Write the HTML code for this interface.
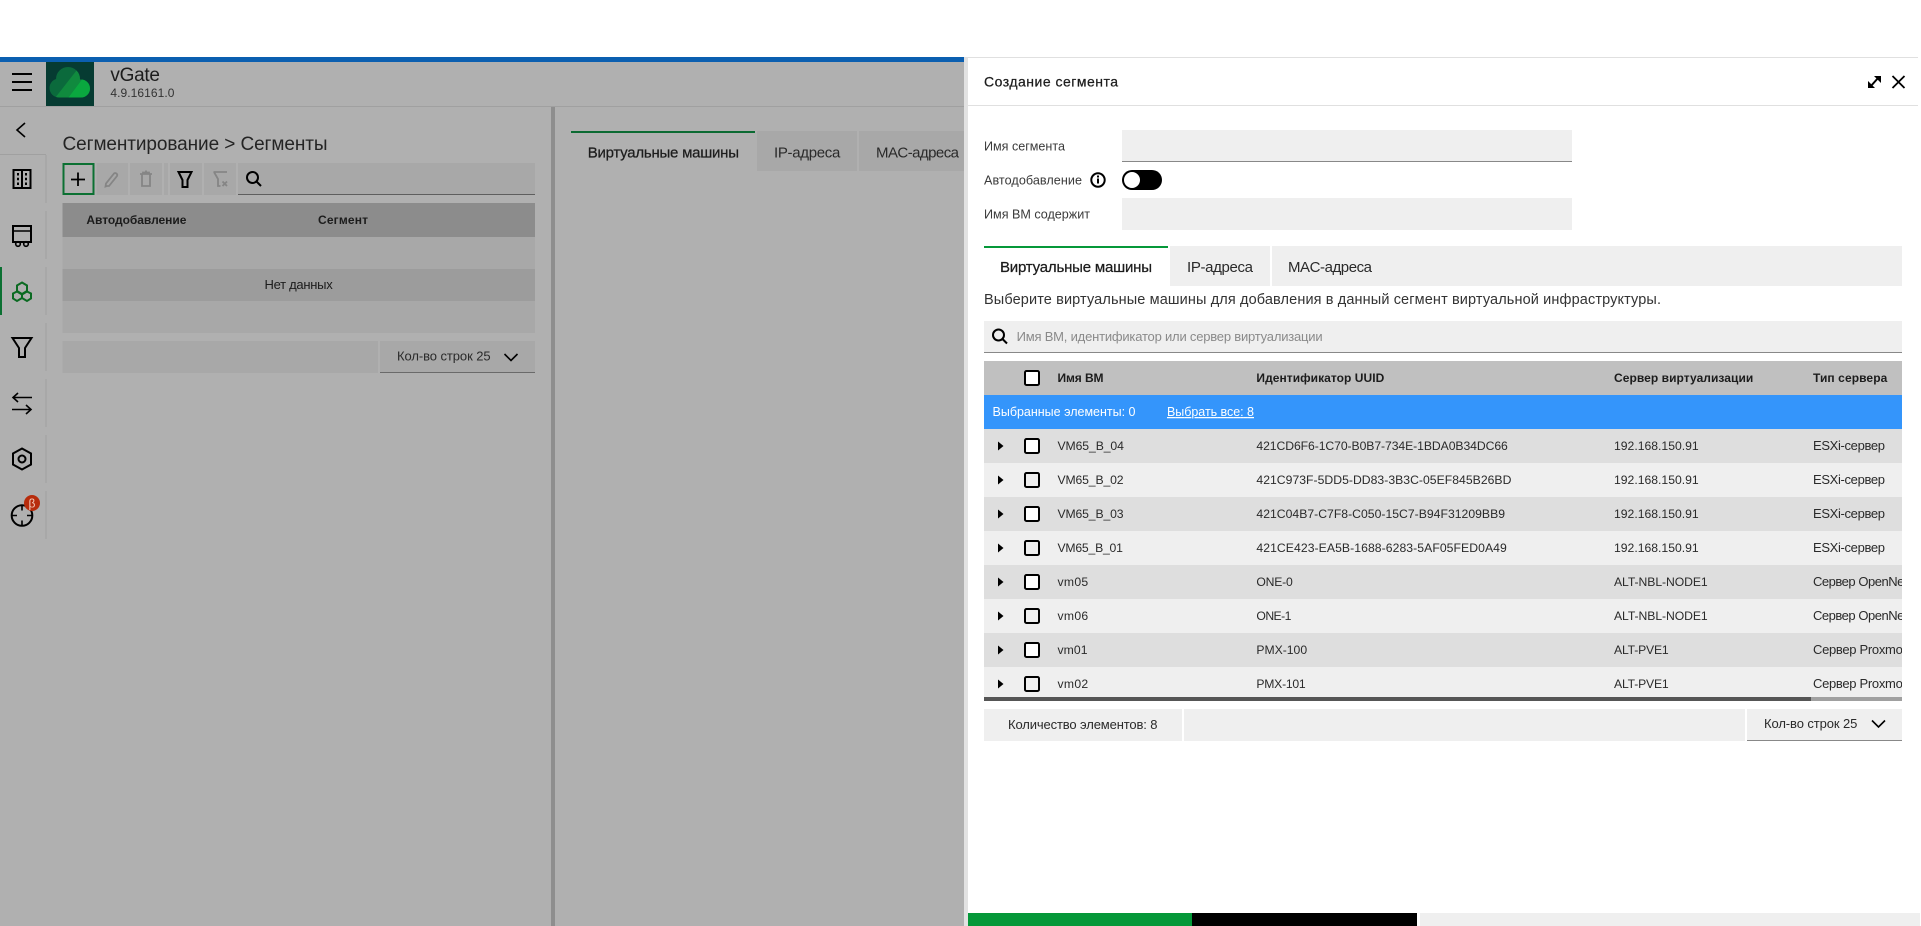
<!DOCTYPE html>
<html lang="ru">
<head>
<meta charset="utf-8">
<title>vGate - Создание сегмента</title>
<style>
html,body{margin:0;padding:0;background:#fff;width:1921px;height:926px;overflow:hidden}
svg{display:block}
text{font-family:"Liberation Sans","Noto Sans CJK SC",sans-serif;font-size:12.2px;fill:#2a2a2a}
.d{fill:#1c1c1c}
.b{font-weight:bold;font-size:12px}
.c{font-size:13px}
.s{font-size:15px}
.m{stroke:#1c1c1c;stroke-width:.25px}
.ic{fill:none;stroke:#000;stroke-width:2}
.t{stroke-width:1.6}
.g{fill:none;stroke:#858585;stroke-width:1.8}
.cb{fill:#fff;stroke:#000;stroke-width:2}
.a{fill:#000}
.l{font-size:12.6px;fill:#3a3a3a}
</style>
</head>
<body>
<svg width="1921" height="926" viewBox="0 0 1921 926" xmlns="http://www.w3.org/2000/svg">
<defs>
<clipPath id="cl"><circle cx="59" cy="88" r="9.500"/><circle cx="68" cy="79" r="12"/><circle cx="81" cy="88.500" r="9"/><rect x="59" y="85" width="22" height="12.500"/></clipPath>
<clipPath id="tb"><rect x="984" y="361" width="918" height="336"/></clipPath>
<clipPath id="lt"><rect x="560" y="120" width="404" height="60"/></clipPath>
</defs>

<!-- Background shell -->
<rect x="0" y="0" width="1921" height="926" fill="#fff"/>
<rect x="0" y="62" width="964" height="864" fill="#b0b0b0"/>
<rect x="0" y="57" width="964" height="5" fill="#0b5fb0"/>
<rect x="0" y="106" width="964" height="1" fill="#a0a0a0"/>
<rect x="551" y="107" width="4" height="819" fill="#8e8e8e"/>

<!-- App header -->
<rect x="12" y="73" width="20" height="2" class="a"/>
<rect x="12" y="81" width="20" height="2" class="a"/>
<rect x="12" y="89" width="20" height="2" class="a"/>
<rect x="46" y="62" width="48" height="44" fill="#063b32"/>
<g clip-path="url(#cl)">
<rect x="46" y="62" width="48" height="44" fill="#0b6a3c"/>
<polygon points="55,98 80,66 92,66 68,98" fill="#108a3e"/>
<polygon points="68,98 92,66 100,66 100,98" fill="#0aa83f"/>
</g>
<text x="110.400" y="81" class="d" style="font-size:19px" textLength="49.600">vGate</text>
<text x="110.400" y="97" style="font-size:12px;fill:#333" textLength="64">4.9.16161.0</text>

<!-- Sidebar -->
<polyline points="25,123 17,130 25,137" class="ic t"/>
<rect x="0" y="154" width="46" height="1" fill="#a0a0a0"/>
<rect x="45.500" y="155" width="1" height="48" fill="#a0a0a0"/>
<rect x="45.500" y="211" width="1" height="48" fill="#a0a0a0"/>
<rect x="45.500" y="267" width="1" height="48" fill="#a0a0a0"/>
<rect x="45.500" y="323" width="1" height="48" fill="#a0a0a0"/>
<rect x="45.500" y="379" width="1" height="48" fill="#a0a0a0"/>
<rect x="45.500" y="435" width="1" height="48" fill="#a0a0a0"/>
<rect x="45.500" y="491" width="1" height="48" fill="#a0a0a0"/>
<rect x="0" y="267" width="2" height="48" fill="#0b7032"/>

<!-- Sidebar icons -->
<rect x="13.500" y="170" width="17" height="18" class="ic"/>
<path d="M22 170V188" class="ic"/>
<path d="M18 173v2.500M18 177.800v2.500M18 182.500v2.500M26 173v2.500M26 177.800v2.500M26 182.500v2.500" class="ic"/>

<path d="M13 226H31V242H13Z" class="ic"/>
<path d="M13 231H31" class="ic t"/>
<circle cx="18" cy="244" r="2.300" class="ic t"/>
<circle cx="26" cy="244" r="2.300" class="ic t"/>

<g fill="none" stroke="#0b6a22" stroke-width="2">
<path d="M22 282.500l5 3v5.500l-5 3-5-3v-5.500z"/>
<path d="M17 291.500l5 3v3.500l-5 3-4-2.500v-5z"/>
<path d="M27 291.500l-5 3v3.500l5 3 4-2.500v-5z"/>
</g>

<path d="M12.500 338H31.500L25 348V357H19V348Z" class="ic"/>

<path d="M32 397.500H13M18 393L13 397.500L18 402" class="ic t"/>
<path d="M12 409.500H31M26 405L31 409.500L26 414" class="ic t"/>

<path d="M22 448.500L31 453.500V464.500L22 469.500L13 464.500V453.500Z" class="ic"/>
<circle cx="22" cy="459" r="3.500" class="ic"/>

<circle cx="22" cy="515.500" r="10.300" class="ic"/>
<path d="M22 505V510.500M22 520.500V526M11.500 515.500H17M27 515.500H32.500" class="ic t"/>
<circle cx="32" cy="503" r="8" fill="#b72c0c"/>
<text x="32" y="507.500" text-anchor="middle" style="font-size:12px;fill:#f2c8b8">β</text>

<!-- Left content -->
<text x="62.500" y="150" class="d" style="font-size:19px;fill:#242424" textLength="265">Сегментирование &gt; Сегменты</text>

<rect x="63.500" y="164" width="30" height="30" fill="none" stroke="#0b7032" stroke-width="2"/>
<path d="M78 172.500V186M71 179.500H85" class="ic t" style="stroke-width:1.800"/>
<rect x="96.500" y="163" width="31.500" height="32" fill="#a8a8a8"/>
<path d="M107 186l-1.500 .5 .5-3 8-10a2 2 0 0 1 3 2.500l-8 10z" class="g"/>
<rect x="130" y="163" width="32" height="32" fill="#a8a8a8"/>
<path d="M140 174H152M143 174V172.500H149V174M142 174V186H150V174M146 170.500V172" class="g"/>
<rect x="164" y="163" width="4" height="32" fill="#a8a8a8"/>
<rect x="170" y="163" width="32" height="32" fill="#a8a8a8"/>
<path d="M178.500 172H191.500L187.500 180V187H182.500V180Z" class="ic"/>
<rect x="204" y="163" width="32" height="32" fill="#a8a8a8"/>
<path d="M213.500 172H227M214 172L218 179V186H220.500" class="g"/>
<path d="M222.500 181.500L227 186M227 181.500L222.500 186" class="g"/>
<rect x="238" y="163" width="297" height="31" fill="#a8a8a8"/>
<rect x="238" y="194" width="297" height="1" fill="#5e5e5e"/>
<circle cx="252.500" cy="177.500" r="5.500" class="ic"/>
<path d="M256.500 181.500L261 186" class="ic"/>

<rect x="62.500" y="203" width="472.500" height="34" fill="#8c8c8c"/>
<text x="86.400" y="224" class="b d" textLength="100">Автодобавление</text>
<text x="318" y="224" class="b d" textLength="50">Сегмент</text>
<rect x="62.500" y="237" width="472.500" height="32" fill="#a8a8a8"/>
<rect x="62.500" y="269" width="472.500" height="32" fill="#9c9c9c"/>
<rect x="62.500" y="301" width="472.500" height="32" fill="#a8a8a8"/>
<text x="264.500" y="289" class="c d" textLength="68.200">Нет данных</text>

<rect x="62.500" y="341" width="315.500" height="32" fill="#a8a8a8"/>
<rect x="380" y="341" width="155" height="31" fill="#a8a8a8"/>
<rect x="380" y="372" width="155" height="1" fill="#6a6a6a"/>
<text x="397" y="360.500" class="c" textLength="93.600">Кол-во строк 25</text>
<polyline points="504.500,354 511,360.500 517.500,354" class="ic t"/>

<!-- Right background tabs -->
<rect x="571" y="131" width="184" height="2" fill="#0b6a32"/>
<rect x="757" y="131" width="100" height="40" fill="#a8a8a8"/>
<rect x="859" y="131" width="105" height="40" fill="#a8a8a8"/>
<text x="587.700" y="157.500" class="s d m" textLength="151.300">Виртуальные машины</text>
<text x="774" y="157.500" class="s" textLength="66.300">IP-адреса</text>
<g clip-path="url(#lt)"><text x="876" y="157.500" class="s" textLength="83">MAC-адреса</text></g>

<!-- Modal side panel -->
<rect x="964" y="57" width="4" height="869" fill="#e2e2e2"/>
<rect x="968" y="58" width="953" height="868" fill="#fff"/>
<rect x="964" y="57" width="954" height="1" fill="#e0e0e0"/>
<rect x="968" y="105" width="950" height="1" fill="#e0e0e0"/>
<text x="984" y="86.500" class="d m" style="font-size:14px" textLength="134">Создание сегмента</text>

<path d="M1870.500 86.500L1878.500 77.500" class="ic"/>
<polygon points="1874,76 1881,76 1881,83" class="a"/>
<polygon points="1868,81 1868,88 1875,88" class="a"/>
<path d="M1892.500 76L1904.500 88M1904.500 76L1892.500 88" class="ic t" style="stroke-width:1.800"/>

<!-- Form -->
<text x="984" y="150.500" class="l" textLength="81">Имя сегмента</text>
<rect x="1122" y="130" width="450" height="31" fill="#efefef"/>
<rect x="1122" y="161" width="450" height="1" fill="#888"/>
<text x="984" y="184.500" class="l" textLength="98">Автодобавление</text>
<circle cx="1098" cy="180" r="6.700" class="ic"/>
<rect x="1097" y="178.500" width="2" height="5" class="a"/>
<rect x="1097" y="175.500" width="2" height="2" class="a"/>
<rect x="1122" y="170" width="40" height="20" rx="10" class="a"/>
<circle cx="1132" cy="180" r="8" fill="#fff"/>
<text x="984" y="218.500" class="l" textLength="106">Имя ВМ содержит</text>
<rect x="1122" y="198" width="450" height="32" fill="#efefef"/>

<!-- Tabs -->
<rect x="984" y="246" width="184" height="2" fill="#059839"/>
<rect x="1170" y="246" width="100" height="40" fill="#efefef"/>
<rect x="1272" y="246" width="630" height="40" fill="#efefef"/>
<text x="1000" y="272" class="s d m" textLength="152">Виртуальные машины</text>
<text x="1187" y="272" class="s" textLength="66">IP-адреса</text>
<text x="1288" y="272" class="s" textLength="84">MAC-адреса</text>
<text x="984" y="304" style="font-size:14.500px;fill:#333" textLength="677">Выберите виртуальные машины для добавления в данный сегмент виртуальной инфраструктуры.</text>

<!-- Search -->
<rect x="984" y="321" width="918" height="31" fill="#efefef"/>
<rect x="984" y="352" width="918" height="1" fill="#888"/>
<circle cx="998.500" cy="335" r="5.500" class="ic"/>
<path d="M1002.500 339L1007 343.500" class="ic"/>
<text x="1016.600" y="341" style="font-size:13px;fill:#8a8a8a" textLength="306">Имя ВМ, идентификатор или сервер виртуализации</text>

<!-- Table -->
<rect x="984" y="361" width="918" height="34" fill="#c0c0c0"/>
<rect x="1025" y="371" width="14" height="14" rx="1.500" class="cb"/>
<text x="1057.500" y="382" class="b d" textLength="46">Имя ВМ</text>
<text x="1256.400" y="382" class="b d" textLength="127.900">Идентификатор UUID</text>
<text x="1614" y="382" class="b d" textLength="139.300">Сервер виртуализации</text>
<text x="1813" y="382" class="b d" textLength="74.300">Тип сервера</text>

<rect x="984" y="395" width="918" height="34" fill="#3495fb"/>
<text x="992.500" y="416" style="font-size:12.500px;fill:#fff" textLength="143">Выбранные элементы: 0</text>
<text x="1167" y="416" style="font-size:12.500px;fill:#fff" text-decoration="underline" textLength="87">Выбрать все: 8</text>

<g clip-path="url(#tb)">
<rect x="984" y="429" width="918" height="34" fill="#dedede"/>
<rect x="984" y="463" width="918" height="34" fill="#efefef"/>
<rect x="984" y="497" width="918" height="34" fill="#dedede"/>
<rect x="984" y="531" width="918" height="34" fill="#efefef"/>
<rect x="984" y="565" width="918" height="34" fill="#dedede"/>
<rect x="984" y="599" width="918" height="34" fill="#efefef"/>
<rect x="984" y="633" width="918" height="34" fill="#dedede"/>
<rect x="984" y="667" width="918" height="34" fill="#efefef"/>

<polygon points="998,441.500 1003.500,446 998,450.500" class="a"/>
<polygon points="998,475.500 1003.500,480 998,484.500" class="a"/>
<polygon points="998,509.500 1003.500,514 998,518.500" class="a"/>
<polygon points="998,543.500 1003.500,548 998,552.500" class="a"/>
<polygon points="998,577.500 1003.500,582 998,586.500" class="a"/>
<polygon points="998,611.500 1003.500,616 998,620.500" class="a"/>
<polygon points="998,645.500 1003.500,650 998,654.500" class="a"/>
<polygon points="998,679.500 1003.500,684 998,688.500" class="a"/>

<rect x="1025" y="439" width="14" height="14" rx="1.500" class="cb"/>
<rect x="1025" y="473" width="14" height="14" rx="1.500" class="cb" style="fill:#efefef"/>
<rect x="1025" y="507" width="14" height="14" rx="1.500" class="cb"/>
<rect x="1025" y="541" width="14" height="14" rx="1.500" class="cb" style="fill:#efefef"/>
<rect x="1025" y="575" width="14" height="14" rx="1.500" class="cb"/>
<rect x="1025" y="609" width="14" height="14" rx="1.500" class="cb" style="fill:#efefef"/>
<rect x="1025" y="643" width="14" height="14" rx="1.500" class="cb"/>
<rect x="1025" y="677" width="14" height="14" rx="1.500" class="cb" style="fill:#efefef"/>

<text x="1057.500" y="450" textLength="66.400">VM65_B_04</text>
<text x="1256.400" y="450" textLength="251.400">421CD6F6-1C70-B0B7-734E-1BDA0B34DC66</text>
<text x="1614" y="450" textLength="84.700">192.168.150.91</text>
<text x="1813" y="450" class="c" textLength="72">ESXi-сервер</text>

<text x="1057.500" y="484" textLength="66">VM65_B_02</text>
<text x="1256.400" y="484" textLength="255">421C973F-5DD5-DD83-3B3C-05EF845B26BD</text>
<text x="1614" y="484" textLength="84.700">192.168.150.91</text>
<text x="1813" y="484" class="c" textLength="72">ESXi-сервер</text>

<text x="1057.500" y="518" textLength="66">VM65_B_03</text>
<text x="1256.400" y="518" textLength="248.600">421C04B7-C7F8-C050-15C7-B94F31209BB9</text>
<text x="1614" y="518" textLength="84.700">192.168.150.91</text>
<text x="1813" y="518" class="c" textLength="72">ESXi-сервер</text>

<text x="1057.500" y="552" textLength="65.400">VM65_B_01</text>
<text x="1256.400" y="552" textLength="250.400">421CE423-EA5B-1688-6283-5AF05FED0A49</text>
<text x="1614" y="552" textLength="84.700">192.168.150.91</text>
<text x="1813" y="552" class="c" textLength="72">ESXi-сервер</text>

<text x="1057.500" y="586" textLength="30.700">vm05</text>
<text x="1256.400" y="586" textLength="36.400">ONE-0</text>
<text x="1614" y="586" textLength="93.700">ALT-NBL-NODE1</text>
<text x="1813" y="586" class="c" textLength="114">Сервер OpenNebula</text>

<text x="1057.500" y="620" textLength="30.700">vm06</text>
<text x="1256.400" y="620" textLength="35">ONE-1</text>
<text x="1614" y="620" textLength="93.700">ALT-NBL-NODE1</text>
<text x="1813" y="620" class="c" textLength="114">Сервер OpenNebula</text>

<text x="1057.500" y="654" textLength="30">vm01</text>
<text x="1256.400" y="654" textLength="50.700">PMX-100</text>
<text x="1614" y="654" textLength="54.700">ALT-PVE1</text>
<text x="1813" y="654" class="c" textLength="96">Сервер Proxmox</text>

<text x="1057.500" y="688" textLength="30.700">vm02</text>
<text x="1256.400" y="688" textLength="49.300">PMX-101</text>
<text x="1614" y="688" textLength="54.700">ALT-PVE1</text>
<text x="1813" y="688" class="c" textLength="96">Сервер Proxmox</text>
</g>

<rect x="984" y="697" width="918" height="4" fill="#a0a0a0"/>
<rect x="984" y="697" width="827" height="4" fill="#555"/>

<!-- Table footer -->
<rect x="984" y="709" width="198" height="32" fill="#efefef"/>
<rect x="1184" y="709" width="561" height="32" fill="#efefef"/>
<rect x="1747" y="709" width="155" height="31" fill="#efefef"/>
<rect x="1747" y="740" width="155" height="1" fill="#888"/>
<text x="1008" y="729" class="c" textLength="149.500">Количество элементов: 8</text>
<text x="1764" y="728" class="c" textLength="93.300">Кол-во строк 25</text>
<polyline points="1872,720.500 1878.500,727 1885,720.500" class="ic t"/>

<!-- Bottom buttons -->
<rect x="968" y="913" width="224" height="13" fill="#059839"/>
<rect x="1192" y="913" width="225" height="13" class="a"/>
<rect x="1420" y="913" width="500" height="13" fill="#efefef"/>
</svg>
</body>
</html>
